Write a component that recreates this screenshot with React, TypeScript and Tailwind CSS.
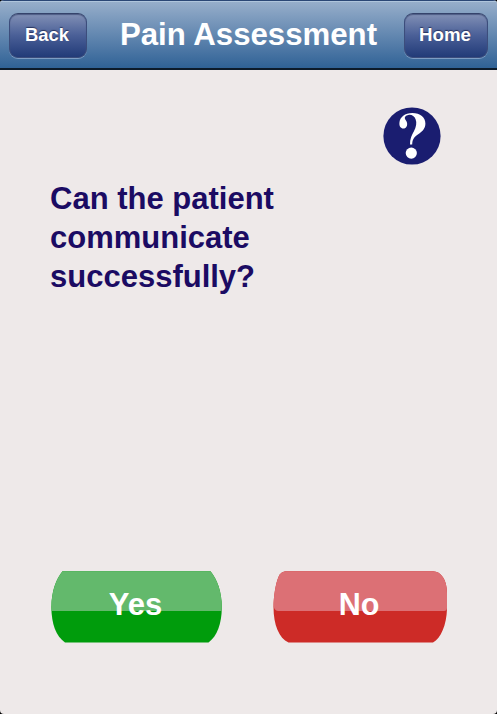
import React from "react";

function NavButton({ label, className }: { label: string; className: string }) {
  return (
    <button
      className={`h-[45px] rounded-[9px] border border-[#3c4d7c] border-t-[#35436b] bg-gradient-to-b from-[#8290b5] via-[#4a5f97] to-[#223b78] leading-none font-bold text-white shadow-[0_1px_0_#7d9dc4,inset_0_1px_1px_#4d5b84] [text-shadow:0_-1px_1px_rgba(20,30,70,0.7)] ${className}`}
    >
      {label}
    </button>
  );
}

function HelpIcon() {
  return (
    <svg width="58" height="58" viewBox="0 0 58 58" aria-label="Help">
      <circle cx="29" cy="29" r="28.6" fill="#1a1d70" />
      <path
        d="M27 37.4 C26.8 32.2 28.8 28.3 30.8 24.6 C33.2 20 34 15.8 32.6 12.2 C31.4 9 28.4 7.3 25.4 7.9 C22.6 8.4 21.2 10.3 22 12 C22.5 13 23.8 14.2 24.1 16.2 C24.5 19.3 22.8 21.5 20.3 21.5 C17.7 21.5 16.2 19.2 16.4 16 C16.9 9.9 22 6 29.2 6 C37.4 6 42.4 10.3 42.4 16.6 C42.4 21.6 39.4 24.6 35.2 27.3 C31.2 29.9 29.2 32.6 29.2 37.4 Z"
        fill="#fff"
      />
      <circle cx="28.3" cy="46.1" r="5.6" fill="#fff" />
    </svg>
  );
}

export default function App() {
  return (
    <div className="h-[714px] w-[497px] overflow-hidden bg-black font-['Liberation_Sans',Arial,sans-serif]">
      <div className="flex h-full flex-col overflow-hidden rounded-[4px] bg-[#eee9e9]">
        <header className="flex h-[70px] shrink-0 items-start justify-between border-t border-b-2 border-t-[#2b4775] border-b-[#0c1b2b] bg-gradient-to-b from-[#98afcb] to-[#2f6296] pr-[9px] pl-[9px] shadow-[inset_0_1px_0_#afc5dc]">
          <NavButton label="Back" className="mt-[11.5px] w-[78px] pr-[2px] text-[18.4px]" />
          <h1 className="mt-[15px] ml-[6px] text-[31.2px] leading-[37px] font-bold whitespace-nowrap text-white">
            Pain Assessment
          </h1>
          <NavButton label="Home" className="mt-[11.5px] w-[84px] pr-[2px] text-[18.7px]" />
        </header>
        <main className="flex flex-1 flex-col">
          <div className="flex justify-end pt-[37px] pr-[56px]">
            <HelpIcon />
          </div>
          <p className="mt-[14px] ml-[50px] w-[260px] text-[31px] leading-[39px] font-bold text-[#1b0b63]">
            Can the patient communicate successfully?
          </p>
          <div className="mt-auto mb-[71px] ml-[51px] flex gap-[51px]">
            <button className="relative h-[72px] w-[171px] pr-[2px] pb-[5px] text-[31px] leading-none font-bold text-white">
              <svg className="absolute inset-0" width="171" height="72" viewBox="0 0 171 72">
                <path d="M11.5 0.3 H159.5 C166 8 170.8 21 170.8 36 C170.8 53 166 65 157.5 71.6 H14 C5 65 0.4 53 0.4 36 C0.4 21 5 8 11.5 0.3Z" fill="#009c0c" />
                <path d="M11.5 0.3 H159.5 C166 8 170.8 21 170.8 36 L170.6 40 H0.6 L0.4 36 C0.4 21 5 8 11.5 0.3Z" fill="#63b96c" />
              </svg>
              <span className="relative">Yes</span>
            </button>
            <button className="relative h-[72px] w-[175px] pr-[3px] pb-[5px] text-[30.5px] leading-none font-bold text-white">
              <svg className="absolute inset-0" width="175" height="72" viewBox="0 0 175 72">
                <path d="M14.5 0.3 H160 C168 0.3 174 9 174 22 V38 C173.5 54 168 67 160 71.6 H15.5 C6 67 0.5 54 0.5 36 C0.8 25 2.5 13 5.5 6 C7 2 10 0.3 14.5 0.3Z" fill="#cd2b27" />
                <path d="M14.5 0.3 H160 C168 0.3 174 9 174 22 V37 Q174 40 171 40 H5 Q0.5 40 0.6 33 C0.8 25 2.5 13 5.5 6 C7 2 10 0.3 14.5 0.3Z" fill="#dc7075" />
              </svg>
              <span className="relative">No</span>
            </button>
          </div>
        </main>
      </div>
    </div>
  );
}
